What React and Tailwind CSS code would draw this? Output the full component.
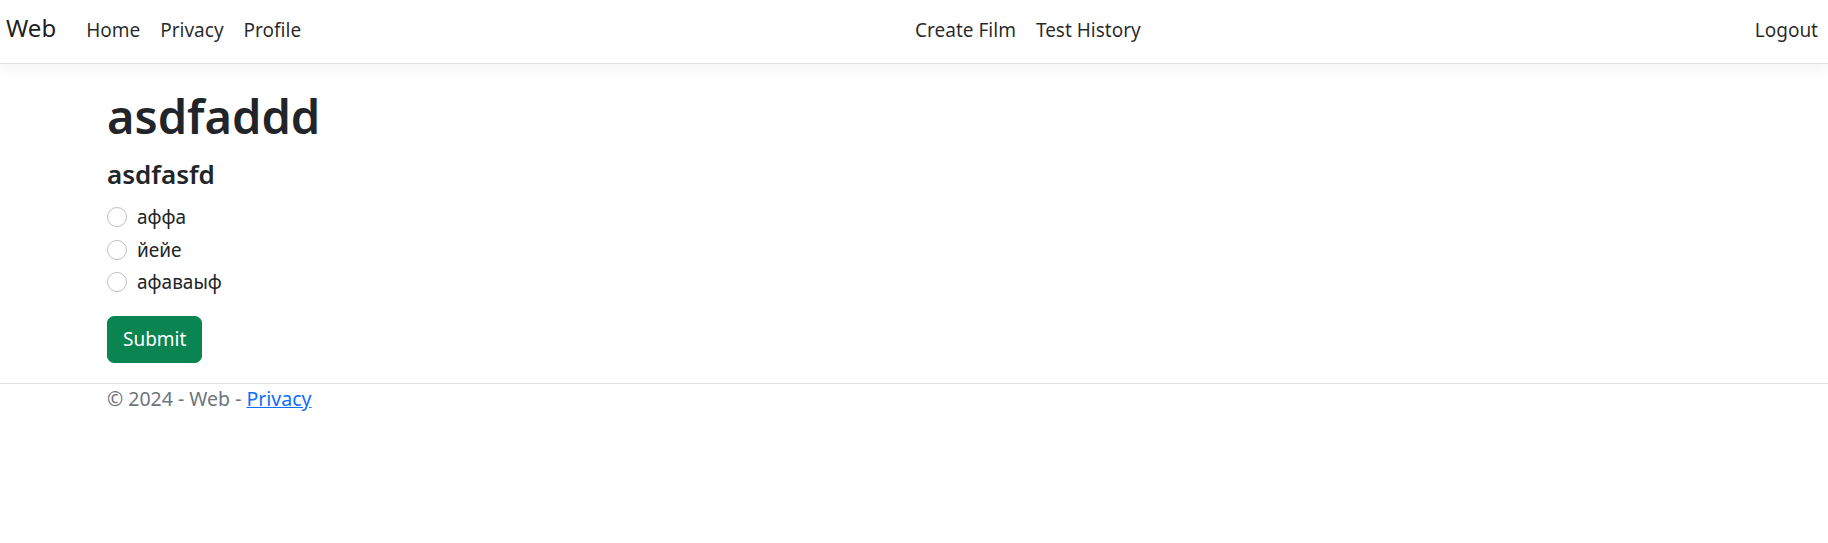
export default function App() {
  const options = ["аффа", "йейе", "афаваыф"];

  return (
    <div className="min-h-[543px] bg-white text-[#212529] text-[19px] leading-[30px] font-['Noto_Sans',sans-serif]">

      {/* NAVBAR */}
      <nav className="h-[64px] flex items-baseline pt-[9px] pl-[6px] border-b border-[#dee2e6] shadow-[0_5px_15px_rgba(0,0,0,0.05)]">
        <a className="text-[24px] leading-[37px] text-[rgba(0,0,0,0.9)] mr-[20px]">Web</a>
        <ul className="flex items-baseline">
          <li className="px-[10px] text-[rgba(0,0,0,0.85)]">Home</li>
          <li className="px-[10px] text-[rgba(0,0,0,0.85)]">Privacy</li>
          <li className="px-[10px] text-[rgba(0,0,0,0.85)]">Profile</li>
        </ul>
        <ul className="flex items-baseline mx-auto">
          <li className="px-[10px] text-[rgba(0,0,0,0.85)]">Create Film</li>
          <li className="px-[10px] text-[rgba(0,0,0,0.85)]">Test History</li>
        </ul>
        <ul className="flex items-baseline">
          <li className="px-[10px] text-[rgba(0,0,0,0.85)]">Logout</li>
        </ul>
      </nav>

      {/* MAIN */}
      <main className="pl-[107px] pt-[22px]">
        <h1 className="text-[47px] leading-[60px] font-semibold mb-[13px]">asdfaddd</h1>
        <h4 className="text-[26px] leading-[30px] font-semibold mb-[13px]">asdfasfd</h4>

        <div className="flex flex-col">
          {options.map((o) => (
            <label key={o} className="flex items-start h-[30px] mb-[2.5px]">
              <span className="mt-[5px] w-[20px] h-[20px] rounded-full border border-[#bfbfbf] bg-white shrink-0" />
              <span className="ml-[10px]">{o}</span>
            </label>
          ))}
        </div>

        <button className="mt-[16px] h-[47px] px-[15px] rounded-[7px] bg-[#0a8451] text-white border border-[#0a8451]">
          Submit
        </button>
      </main>

      {/* FOOTER */}
      <footer className="mt-[20px] border-t border-[#dee2e6] pl-[107px] text-[19.5px] text-[#6c757d]">
        © 2024 - Web - <a className="text-[#0d6efd] underline">Privacy</a>
      </footer>
    </div>
  );
}
